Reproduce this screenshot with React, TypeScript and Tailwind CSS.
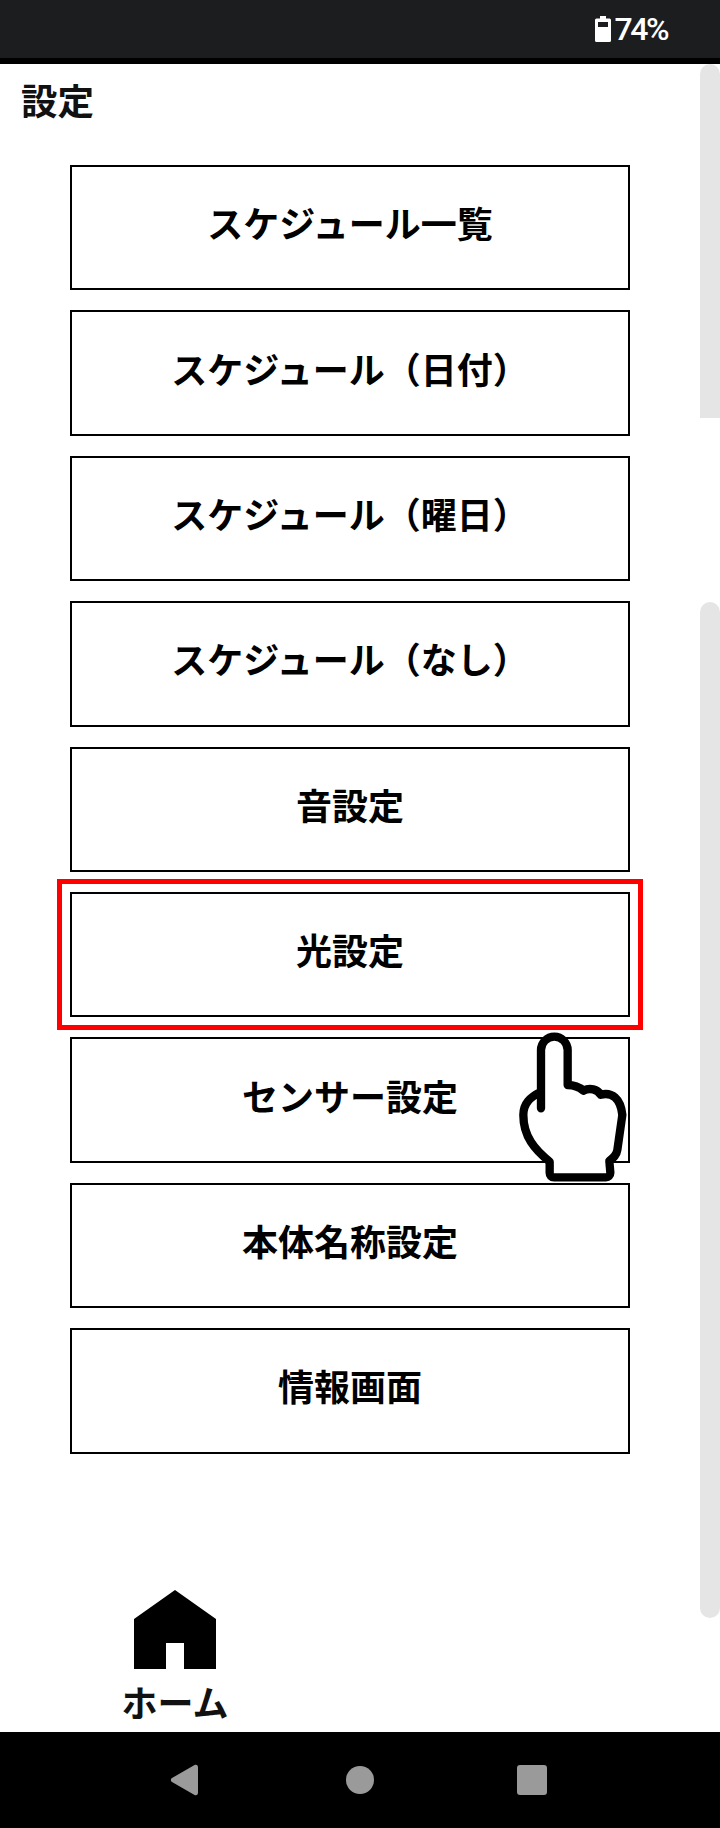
const items = [
  "スケジュール一覧",
  "スケジュール（日付）",
  "スケジュール（曜日）",
  "スケジュール（なし）",
  "音設定",
  "光設定",
  "センサー設定",
  "本体名称設定",
  "情報画面",
];

const font = { fontFamily: '"Noto Sans CJK JP", "Noto Sans", sans-serif' };

function Battery() {
  return (
    <svg width="16" height="26" viewBox="0 0 16 26" className="block">
      <path
        fillRule="evenodd"
        fill="#fff"
        d="M5 0h6v2.5h3.5A1.5 1.5 0 0 1 16 4v20.5a1.5 1.5 0 0 1-1.5 1.5h-13A1.5 1.5 0 0 1 0 24.500V4a1.500 1.500 0 0 1 1.500-1.500H5zM3 6v5h10V6z"
      />
    </svg>
  );
}

function Hand() {
  const d =
    "M183 745 V570 A40 40 0 0 1 263 570 V675 C285 675 300 683 310 692 C330 682 352 688 362 704 C395 695 422 715 427 765 L412 870 C410 885 400 893 388 903 L391 938 C391 947 385 952 378 952 H222 C214 952 209 947 209 938 V905 C165 870 130 830 130 765 C130 730 150 712 183 695";
  return (
    <svg
      width="240"
      height="340"
      viewBox="0 0 720 1020"
      className="absolute left-[480px] top-[796px]"
    >
      <path d={d + " Z"} fill="#fff" stroke="none" />
      <path d={d} fill="none" stroke="#000" strokeWidth="25" strokeLinecap="round" strokeLinejoin="round" />
    </svg>
  );
}

export default function App() {
  return (
    <div className="w-[720px] h-[1828px] flex flex-col bg-white overflow-hidden" style={font}>
      <div className="h-[58px] shrink-0 bg-[#1c1d1f] flex items-center justify-end pr-[53px] gap-[4px]">
        <Battery />
        <span
          className="text-white text-[32px] leading-none font-medium tracking-[-2.5px]"
          style={{ fontFamily: 'Roboto, sans-serif' }}
        >
          74%
        </span>
      </div>
      <div className="h-[6px] shrink-0 bg-black" />

      <main className="relative flex-1 min-h-0 flex flex-col">
        <h1 className="text-[36.5px] leading-[52px] font-bold pl-[21px] pt-[10px] h-[101px] shrink-0 text-[#111]">
          設定
        </h1>
        <div className="flex flex-col gap-[20px] pl-[70px] w-[630px]">
          {items.map((t) => (
            <button
              key={t}
              className="w-[560px] h-[125.4px] border-2 border-black flex items-center justify-center pb-[11px] text-[36px] font-bold text-black bg-white"
            >
              {t}
            </button>
          ))}
        </div>

        <div className="absolute left-[700px] top-0 w-[20px] h-[354px] bg-[#e5e5e5] rounded-t-[10px]" />
        <div className="absolute left-[700px] top-[538px] w-[20px] h-[1016px] bg-[#e5e5e5] rounded-[10px]" />
        <div className="absolute left-[57px] top-[815px] w-[586px] h-[151px] border-[5px] border-[#ff0000]" />
        <Hand />

        <nav className="mt-auto w-[350px] h-[142px] shrink-0 flex flex-col items-center">
          <svg width="82" height="80" viewBox="0 0 82 80" className="block shrink-0">
            <path d="M41 0 L82 29 V79 H50 V53 H32 V79 H0 V29 Z" fill="#000" />
          </svg>
          <span className="mt-[6px] text-[36px] leading-[50px] font-bold text-[#111]">ホーム</span>
        </nav>
      </main>

      <div className="h-[96px] shrink-0 bg-black flex items-center">
        <svg width="720" height="96" viewBox="0 0 720 96" className="block">
          <path d="M195 32.800 A2.500 2.500 0 0 1 198 35 V61 A2.500 2.500 0 0 1 195 63.200 L172 50 A2.300 2.300 0 0 1 172 46 Z" fill="#9a9a9a" />
          <circle cx="360" cy="48" r="14" fill="#9a9a9a" />
          <rect x="517" y="33" width="30" height="30" rx="3" fill="#9a9a9a" />
        </svg>
      </div>
    </div>
  );
}
